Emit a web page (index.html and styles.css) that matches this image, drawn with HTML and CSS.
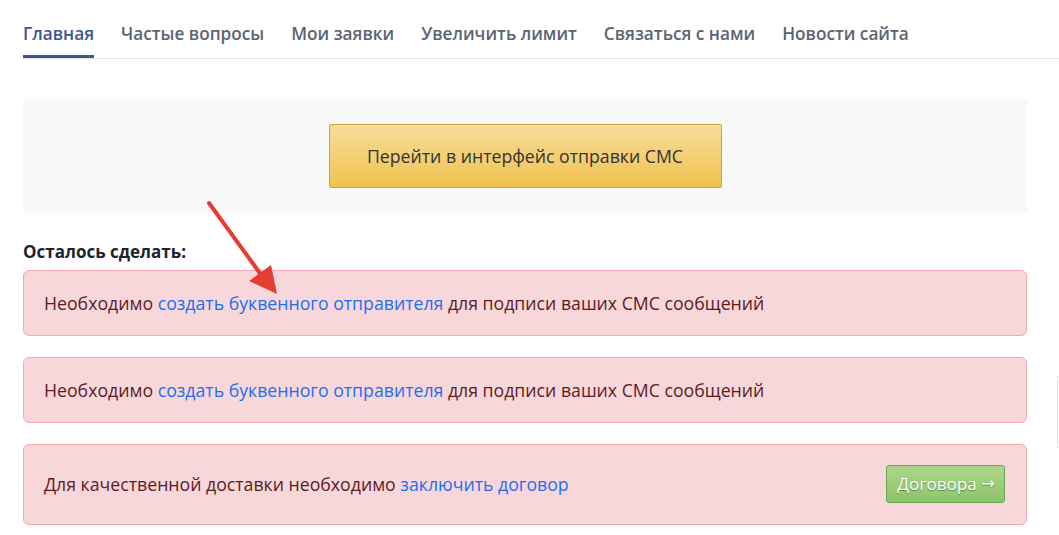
FILE: index.html
```html
<!DOCTYPE html>
<html lang="ru">
<head>
<meta charset="utf-8">
<title>Главная</title>
<link rel="stylesheet" href="styles.css">
</head>
<body>
<div class="page">
  <nav class="tabs">
    <a class="tab active" href="#">Главная</a>
    <a class="tab" href="#">Частые вопросы</a>
    <a class="tab" href="#">Мои заявки</a>
    <a class="tab" href="#">Увеличить лимит</a>
    <a class="tab" href="#">Связаться с нами</a>
    <a class="tab" href="#">Новости сайта</a>
  </nav>
  <div class="content">
    <div class="hero">
      <a class="btn-sms" href="#">Перейти в интерфейс отправки СМС</a>
    </div>
    <h3 class="todo-title">Осталось сделать:</h3>
    <div class="alert">Необходимо <a href="#">создать буквенного отправителя</a> для подписи ваших СМС сообщений</div>
    <div class="alert">Необходимо <a href="#">создать буквенного отправителя</a> для подписи ваших СМС сообщений</div>
    <div class="alert alert-row">
      <span>Для качественной доставки необходимо <a href="#">заключить договор</a></span>
      <a class="btn-green" href="#">Договора <span class="arr">→</span></a>
    </div>
  </div>
</div>
<svg class="arrow" width="100" height="110" viewBox="0 0 100 110">
  <line x1="9" y1="3" x2="62" y2="76" stroke="#e53d31" stroke-width="4" stroke-linecap="round"/>
  <polygon points="77,94 49,81 71,65" fill="#e53d31"/>
</svg>
<div class="edge"></div>
</body>
</html>
```
FILE: styles.css
```css
* { box-sizing: border-box; }
body {
  margin: 0;
  background: #fff;
  font-family: "Open Sans", "Noto Sans", sans-serif;
  color: #212529;
}
.page {
  padding-left: 23px;
}
.tabs {
  display: flex;
  gap: 27px;
  border-bottom: 1px solid #e4e4e4;
}
.tab {
  display: block;
  padding: 21px 0 8px;
  font-size: 17.2px;
  line-height: 26px;
  font-weight: 600;
  color: #5b6570;
  text-decoration: none;
  border-bottom: 3px solid transparent;
}
.tab.active {
  color: #3c5592;
  border-bottom-color: #3c5592;
}
.content {
  width: 1004px;
  padding-top: 40px;
}
.hero {
  background: #f9f9f9;
  padding: 25px 0;
  display: flex;
  justify-content: center;
}
.btn-sms {
  display: flex;
  align-items: center;
  justify-content: center;
  width: 393px;
  height: 64px;
  border: 1px solid #caa23e;
  border-radius: 2px;
  background: linear-gradient(#f7dd9b, #f0c24f);
  color: #333;
  font-size: 17.7px;
  text-decoration: none;
}
.todo-title {
  margin: 27px 0 6px;
  font-size: 17px;
  line-height: 24px;
  font-weight: 700;
  color: #1d2430;
}
.alert {
  background: #f8d7da;
  border: 1px solid #f3aab2;
  border-radius: 6px;
  padding: 20px 20px;
  font-size: 17.7px;
  line-height: 24px;
  color: #5e1a1f;
  margin-bottom: 21px;
}
.alert a {
  color: #1a6ff5;
  text-decoration: none;
}
.alert-row {
  display: flex;
  align-items: center;
  justify-content: space-between;
  padding: 20px 21px 21px 20px;
}
.alert .btn-green {
  display: flex;
  align-items: center;
  gap: 5px;
  height: 38px;
  padding: 0 9px 0 10px;
  border: 1px solid #67a850;
  border-radius: 3px;
  background: linear-gradient(#acd78a, #8ec36b);
  color: #fff;
  font-size: 17px;
  text-shadow: 0 1px 1px rgba(60, 90, 40, 0.6);
}
.alert .btn-green .arr {
  font-family: "DejaVu Sans", sans-serif;
  font-size: 16px;
}
.arrow {
  position: absolute;
  left: 200px;
  top: 200px;
}
.edge {
  position: absolute;
  left: 1057px;
  top: 376px;
  width: 4px;
  height: 72px;
  border-left: 1px solid #e6e6e6;
  border-top: 1px solid #f0f0f0;
  border-bottom: 1px solid #f0f0f0;
}
```
